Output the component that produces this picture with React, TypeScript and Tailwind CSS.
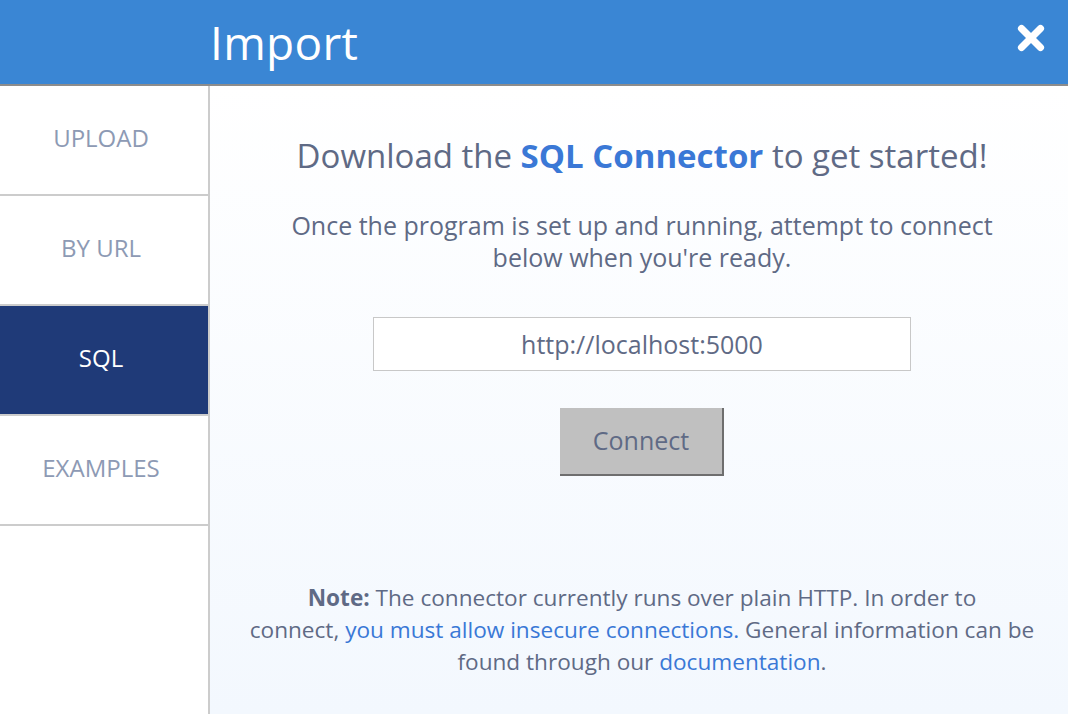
import { X } from "lucide-react";

const tabs = ["UPLOAD", "BY URL", "SQL", "EXAMPLES"];

export default function App() {
  return (
    <div
      className="flex h-[714px] w-[1068px] flex-col overflow-hidden bg-white"
      style={{ fontFamily: '"Open Sans", sans-serif' }}
    >
      {/* Header */}
      <div className="flex h-[86px] shrink-0 items-center border-b-2 border-[#8c8c8c] bg-[#3a86d4] text-white">
        <h1 className="ml-[210px] text-[46px] leading-none tracking-[0.3px]">Import</h1>
        <button className="ml-auto mr-[18px] mt-[-8px]">
          <X className="h-[38px] w-[38px]" strokeWidth={4.5} />
        </button>
      </div>

      <div className="flex flex-1">
        {/* Sidebar */}
        <div className="w-[210px] shrink-0 border-r-2 border-[#cccccc] bg-white">
          {tabs.map((t) => (
            <div
              key={t}
              className={
                t === "SQL"
                  ? "flex h-[110px] items-center justify-center pb-[4px] pr-[6px] border-b-2 border-[#cccccc] bg-[#1f3a78] text-[24px] text-white"
                  : "flex h-[110px] items-center justify-center pb-[4px] pr-[6px] border-b-2 border-[#cccccc] text-[24px] text-[#8d9ab4]"
              }
            >
              {t}
            </div>
          ))}
        </div>

        {/* Content */}
        <div className="flex flex-1 flex-col items-center pl-[6px] bg-gradient-to-b from-white to-[#f3f8fe] text-[#5f6a85]">
          <h2 className="mt-[50px] text-[33px] leading-[40px]">
            Download the <span className="font-bold text-[#3a78d6]">SQL Connector</span> to get started!
          </h2>
          <p className="mt-[33px] text-center text-[25px] leading-[32px]">
            Once the program is set up and running, attempt to connect
            <br />
            below when you're ready.
          </p>
          <input
            className="mt-[44px] h-[54px] w-[538px] border border-[#c8c8c8] bg-white text-center text-[25px] text-[#5f6a85] outline-none"
            defaultValue="http://localhost:5000"
          />
          <button className="mt-[37px] h-[68px] w-[164px] border-b-2 border-r-2 border-[#6e6e6e] bg-[#c0c0c0] text-[25px] text-[#5f6a85]">
            Connect
          </button>
          <p className="mt-[106px] text-center text-[22.6px] leading-[32px]">
            <span className="font-bold">Note:</span> The connector currently runs over plain HTTP. In order to
            <br />
            connect, <span className="text-[#3a78d6]">you must allow insecure connections.</span> General
            information can be
            <br />
            found through our <span className="text-[#3a78d6]">documentation</span>.
          </p>
        </div>
      </div>
    </div>
  );
}
